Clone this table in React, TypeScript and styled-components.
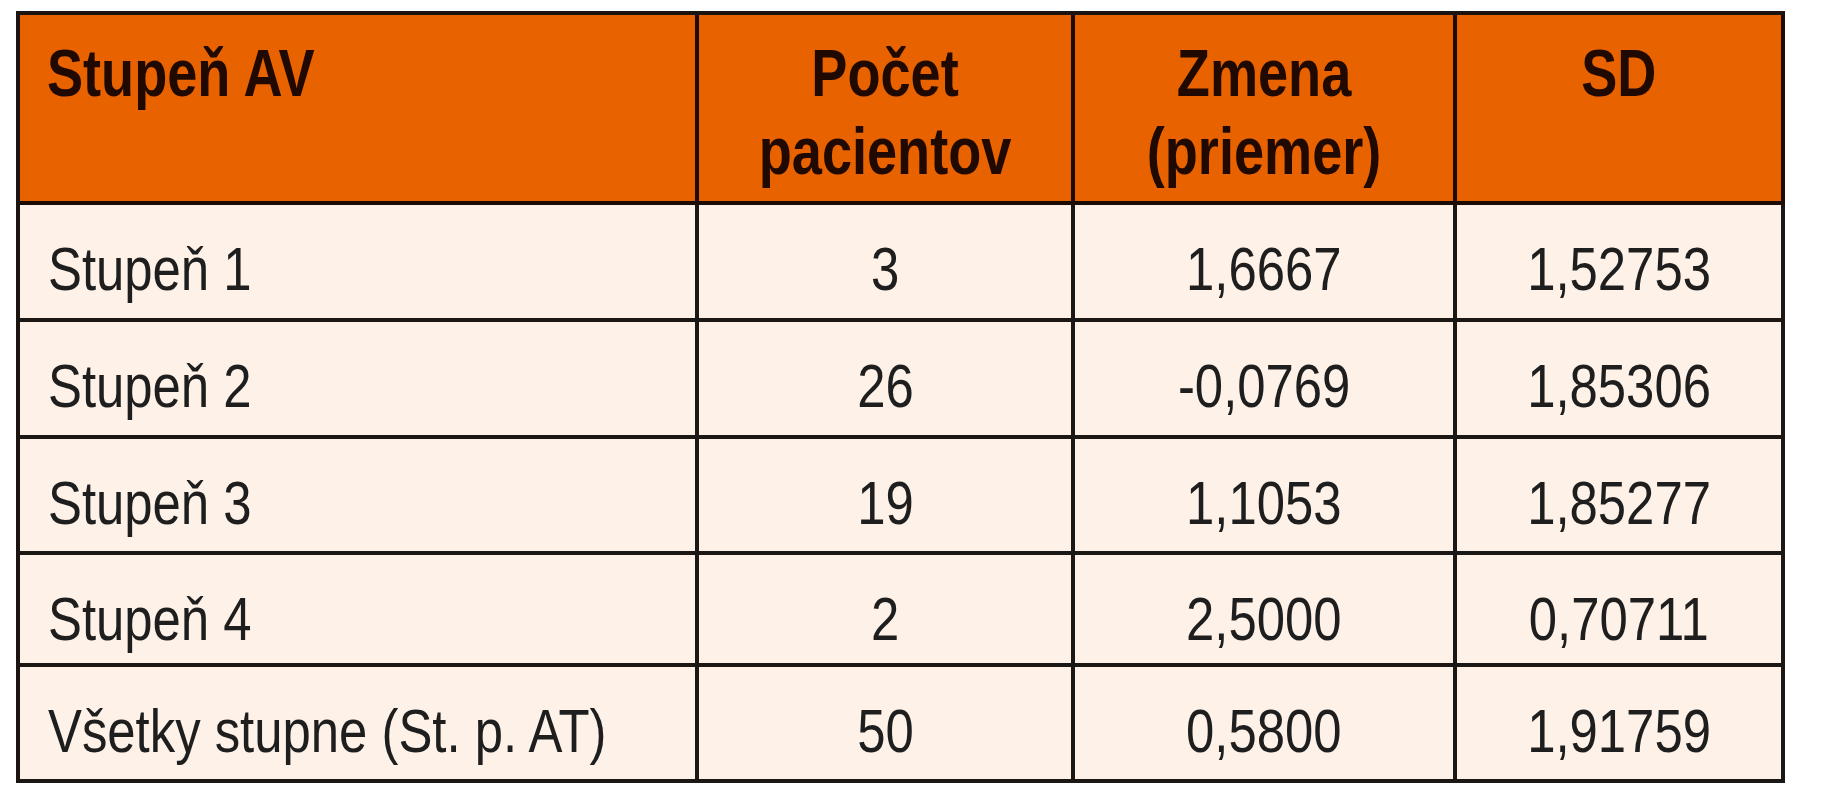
import styled, { createGlobalStyle } from "styled-components";

const GlobalStyle = createGlobalStyle`
  html, body {
    margin: 0;
    padding: 0;
    background-color: #ffffff;
  }
`;

const Page = styled.div`
  padding: 11px 0 0 16px;
`;

const Table = styled.table`
  border-spacing: 0;
  border-top: 4px solid #1c1410;
  border-left: 4px solid #1c1410;
  table-layout: fixed;
  width: 1769px;
  font-family: "Liberation Sans", Arial, sans-serif;
`;

const HeadRow = styled.tr`
  height: 190px;
  background-color: #e86200;
`;

const BodyRow = styled.tr<{ $h: number }>`
  height: ${(p) => p.$h}px;
  background-color: #fdf1e8;
`;

const HeadCell = styled.th<{ $align?: "left" | "center" }>`
  box-sizing: border-box;
  vertical-align: top;
  padding: 19px ${(p) => (p.$align === "left" ? "0 0 27px" : "8px 0 8px")};
  text-align: ${(p) => p.$align || "center"};
  border-right: 4px solid #1c0c04;
  border-bottom: 4px solid #1c0c04;
  font-size: 66px;
  line-height: 78px;
  font-weight: 700;
  color: #1f0900;
  white-space: nowrap;
`;

const Cell = styled.td<{ $align?: "left" | "center" }>`
  box-sizing: border-box;
  vertical-align: top;
  padding: 28px ${(p) => (p.$align === "left" ? "0 0 28px" : "4px 0 4px")};
  text-align: ${(p) => p.$align || "center"};
  border-right: 4px solid #1a1714;
  border-bottom: 4px solid #1a1714;
  font-size: 62px;
  line-height: 71px;
  font-weight: 400;
  color: #1e1e1e;
  white-space: nowrap;
`;

/* the original face is a condensed DIN-like sans; squeeze Liberation Sans to its widths */
const Narrow = styled.span<{ $origin?: "left" | "center" }>`
  display: inline-block;
  transform: scaleX(0.82);
  transform-origin: ${(p) => (p.$origin === "left" ? "left center" : "center")};
`;

const rows = [
  { label: "Stupeň 1", count: "3", change: "1,6667", sd: "1,52753", h: 117 },
  { label: "Stupeň 2", count: "26", change: "-0,0769", sd: "1,85306", h: 117 },
  { label: "Stupeň 3", count: "19", change: "1,1053", sd: "1,85277", h: 116 },
  { label: "Stupeň 4", count: "2", change: "2,5000", sd: "0,70711", h: 112 },
  {
    label: "Všetky stupne (St. p. AT)",
    count: "50",
    change: "0,5800",
    sd: "1,91759",
    h: 116,
  },
];

export default function App() {
  return (
    <>
      <GlobalStyle />
      <Page>
        <Table>
          <colgroup>
            <col style={{ width: 679 }} />
            <col style={{ width: 376 }} />
            <col style={{ width: 382 }} />
            <col style={{ width: 328 }} />
          </colgroup>
          <thead>
            <HeadRow>
              <HeadCell $align="left">
                <Narrow $origin="left">Stupeň AV</Narrow>
              </HeadCell>
              <HeadCell>
                <Narrow>
                  Počet
                  <br />
                  pacientov
                </Narrow>
              </HeadCell>
              <HeadCell>
                <Narrow>
                  Zmena
                  <br />
                  (priemer)
                </Narrow>
              </HeadCell>
              <HeadCell>
                <Narrow>SD</Narrow>
              </HeadCell>
            </HeadRow>
          </thead>
          <tbody>
            {rows.map((r) => (
              <BodyRow key={r.label} $h={r.h}>
                <Cell $align="left">
                  <Narrow $origin="left">{r.label}</Narrow>
                </Cell>
                <Cell>
                  <Narrow>{r.count}</Narrow>
                </Cell>
                <Cell>
                  <Narrow>{r.change}</Narrow>
                </Cell>
                <Cell>
                  <Narrow>{r.sd}</Narrow>
                </Cell>
              </BodyRow>
            ))}
          </tbody>
        </Table>
      </Page>
    </>
  );
}
